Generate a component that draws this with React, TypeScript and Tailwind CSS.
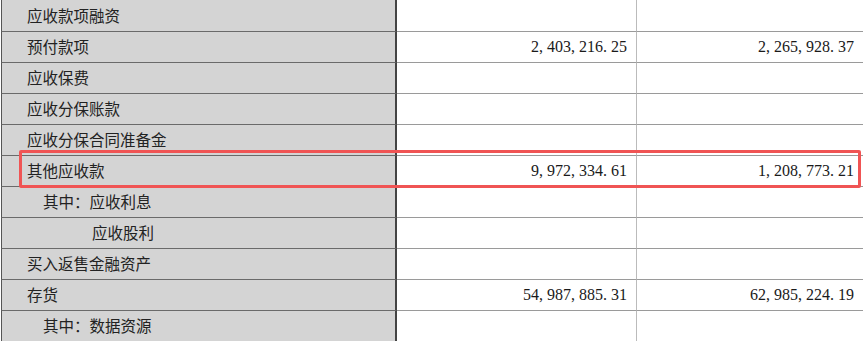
const rows: { label: string; indent?: number; a?: string; b?: string }[] = [
  { label: "应收款项融资" },
  { label: "预付款项", a: "2, 403, 216. 25", b: "2, 265, 928. 37" },
  { label: "应收保费" },
  { label: "应收分保账款" },
  { label: "应收分保合同准备金" },
  { label: "其他应收款", a: "9, 972, 334. 61", b: "1, 208, 773. 21" },
  { label: "其中：应收利息", indent: 1 },
  { label: "应收股利", indent: 2 },
  { label: "买入返售金融资产" },
  { label: "存货", a: "54, 987, 885. 31", b: "62, 985, 224. 19" },
  { label: "其中：数据资源", indent: 1 },
];

export default function App() {
  return (
    <div className="relative w-[863px] h-[341px] overflow-hidden bg-white pl-[1px]">
      {rows.map((r, i) => (
        <div key={i} className="flex h-[31px]">
          <div
            className={`w-[396px] shrink-0 flex items-center bg-[#d4d4d4] border-l border-l-[#555] border-r-2 border-r-[#444] text-[15.5px] text-[#222] font-['Noto_Sans_CJK_SC',sans-serif] ${
              i > 0 ? "border-t border-t-[#6a6a6a]" : ""
            } ${r.indent === 1 ? "pl-[41px]" : r.indent === 2 ? "pl-[90px]" : "pl-[25px]"}`}
          >
            {r.label}
          </div>
          <div
            className={`w-[240px] shrink-0 flex items-center justify-end pr-[9px] border-r border-r-[#bbb] text-[16px] text-[#1a1a1a] font-['Liberation_Serif',serif] ${
              i > 0 ? "border-t border-t-[#9a9a9a]" : ""
            }`}
          >
            {r.a}
          </div>
          <div
            className={`flex-1 flex items-center justify-end pr-[9px] text-[16px] text-[#1a1a1a] font-['Liberation_Serif',serif] ${
              i > 0 ? "border-t border-t-[#9a9a9a]" : ""
            }`}
          >
            {r.b}
          </div>
        </div>
      ))}
      <div className="absolute left-[19px] top-[150px] w-[842px] h-[38px] border-[3px] border-[#f05454] rounded-[2px]" />
    </div>
  );
}
